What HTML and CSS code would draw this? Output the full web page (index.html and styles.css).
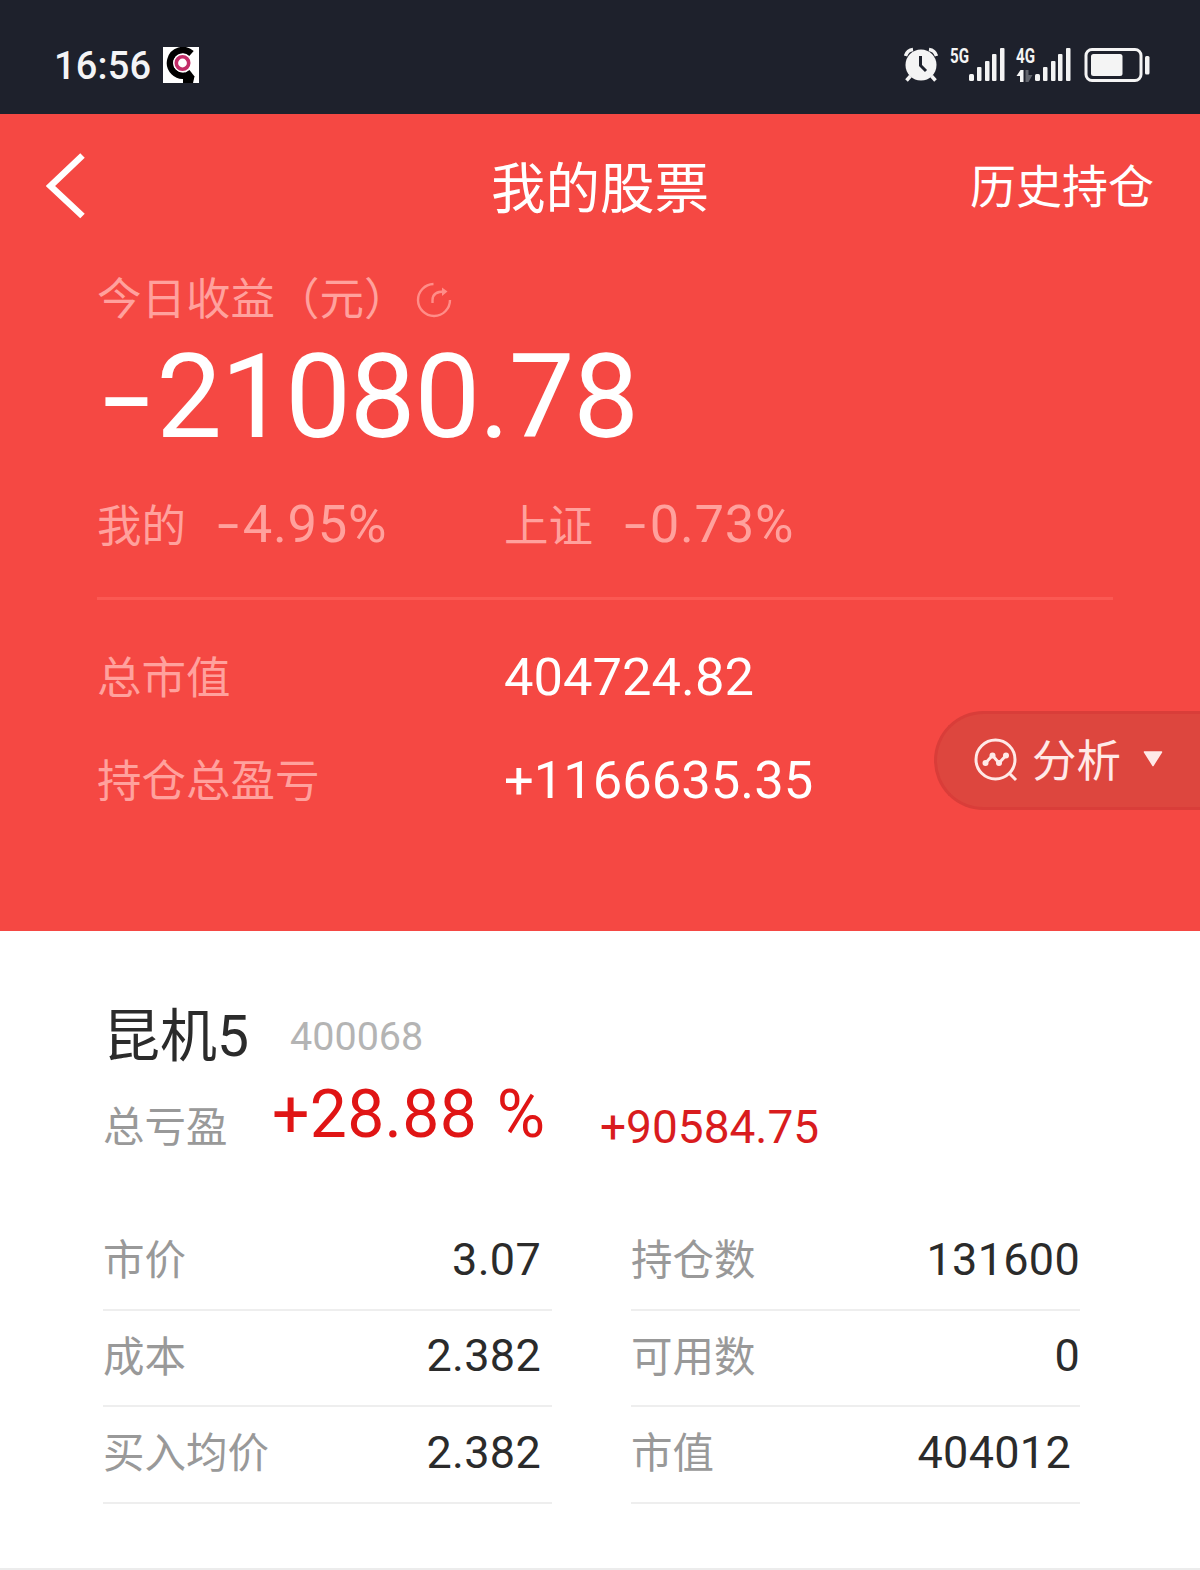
FILE: index.html
```html
<!DOCTYPE html>
<html lang="zh-CN">
<head>
  <meta charset="UTF-8" />
  <meta name="viewport" content="width=device-width, initial-scale=1" />
  <title>我的股票</title>
  <link rel="stylesheet" href="styles.css">
</head>
<body>
  <div id="status-bar">
    <div class="status-left">
      <span class="clock">16:56</span>
      <svg class="app-icon" width="36" height="36" viewBox="0 0 36 36">
        <rect width="36" height="36" fill="#fff"/>
        <path d="M28.500 6.500A12.800 12.800 0 1 0 23 28.300" fill="none" stroke="#000" stroke-width="6.500"/>
        <path d="M20 27l6.500-4 5 6.500-1.500 6.500H20z" fill="#000"/>
        <circle cx="19.500" cy="16" r="9.300" fill="#fff"/>
        <circle cx="19.500" cy="16" r="6.200" fill="none" stroke="#c22d68" stroke-width="3.600"/>
      </svg>
    </div>
    <div class="status-right">
      <svg width="246" height="56" viewBox="0 -10 246 56">
        <g fill="none" stroke="#f4f4f4">
          <path d="M1.500 9A9 9 0 0 1 9 2.500M25 2.500a9 9 0 0 1 7.500 6.500" stroke-width="3.500"/>
          <path d="M6.500 29l-4 4.500M27.500 29l4 4.500" stroke-width="3.500"/>
        </g>
        <circle cx="17" cy="18" r="15.500" fill="#f4f4f4"/>
        <path d="M16.500 9v9.500l5.500 5.500" fill="none" stroke="#1e212c" stroke-width="3"/>
        <text class="net" x="46" y="16" textLength="19" lengthAdjust="spacingAndGlyphs">5G</text>
        <text class="net" x="112" y="16" textLength="19" lengthAdjust="spacingAndGlyphs">4G</text>
        <g fill="#f4f4f4">
          <rect x="65" y="27" width="5" height="7" rx="1.500"/>
          <rect x="73" y="20" width="4.500" height="14" rx="1"/>
          <rect x="81" y="14" width="4.500" height="20" rx="1"/>
          <rect x="88" y="7" width="4.500" height="27" rx="1"/>
          <rect x="96" y="1" width="4.500" height="33" rx="1"/>
          <rect x="131" y="27" width="5" height="7" rx="1.500"/>
          <rect x="139" y="20" width="4.500" height="14" rx="1"/>
          <rect x="147" y="14" width="4.500" height="20" rx="1"/>
          <rect x="154" y="7" width="4.500" height="27" rx="1"/>
          <rect x="162" y="1" width="4.500" height="33" rx="1"/>
          <path d="M116.500 23h3v12h-3.500v-6h-3.500z"/>
        </g>
        <path d="M121.500 23h3v5h4l-4 7h-3z" fill="#62656d"/>
        <rect x="182" y="2.500" width="55" height="31" rx="6" fill="none" stroke="#f4f4f4" stroke-width="3"/>
        <rect x="187" y="7" width="31.500" height="22" rx="2.500" fill="#f4f4f4"/>
        <rect x="241" y="9" width="4.500" height="18.500" rx="1.500" fill="#f4f4f4"/>
      </svg>
    </div>
  </div>

  <header>
    <nav>
      <svg class="back" width="40" height="66" viewBox="0 0 40 66">
        <path d="M36.500 2.500L4.500 33l32 30" fill="none" stroke="#fff" stroke-width="6.500"/>
      </svg>
      <h1>我的股票</h1>
      <a class="history">历史持仓</a>
    </nav>

    <div class="today-label">
      <span>今日收益（元）</span>
      <svg width="36" height="36" viewBox="0 0 36 36" fill="none" stroke="#ff8d88" stroke-width="2.400">
        <path d="M17.500 2A16 16 0 1 0 34 18"/>
        <path d="M16.500 21v-3q0-8.500 12-8.500"/>
        <path d="M26 5.500l5.500 4-5.500 4.500z" fill="#ff8d88" stroke="none"/>
      </svg>
    </div>
    <div class="today-value"><span class="minus">-</span>21080.78</div>

    <div class="summary rates">
      <div><span>我的</span><b><i class="minus">-</i>4.95%</b></div>
      <div><span>上证</span><b><i class="minus">-</i>0.73%</b></div>
    </div>

    <div class="summary total"><span>总市值</span><b>404724.82</b></div>
    <div class="summary total"><span>持仓总盈亏</span><b>+1166635.35</b></div>

    <div id="analyse">
      <svg width="44" height="44" viewBox="0 0 44 44" fill="none" stroke="#ffe9e7" stroke-width="3">
        <circle cx="21.500" cy="21.500" r="19.500"/>
        <path d="M35 35l7 7"/>
        <path d="M11.500 25l7-7.500 6.500 7.500 7-7.500"/>
        <g fill="#ffe9e7" stroke="none">
          <circle cx="11.500" cy="25" r="3"/><circle cx="18.500" cy="17.500" r="3"/>
          <circle cx="25" cy="25" r="3"/><circle cx="32" cy="17.500" r="3"/>
        </g>
      </svg>
      <span>分析</span>
      <svg class="caret" width="20" height="16" viewBox="0 0 20 16">
        <path d="M1.500 1h17L10 14.500z" fill="#ffe9e7" stroke="#ffe9e7" stroke-width="1.500" stroke-linejoin="round"/>
      </svg>
    </div>
  </header>

  <main>
    <div class="stock-name"><h2>昆机5</h2><span>400068</span></div>
    <div class="stock-profit">
      <span class="label">总亏盈</span>
      <span class="percent">+28.88 %</span>
      <span class="amount">+90584.75</span>
    </div>
    <div class="stock-grid">
      <div class="cell"><span>市价</span><b>3.07</b></div>
      <div class="cell"><span>持仓数</span><b>131600</b></div>
      <div class="cell"><span>成本</span><b>2.382</b></div>
      <div class="cell"><span>可用数</span><b>0</b></div>
      <div class="cell"><span>买入均价</span><b>2.382</b></div>
      <div class="cell"><span>市值</span><b class="inset">404012</b></div>
    </div>
  </main>
</body>
</html>
```
FILE: styles.css
```css
* {
  box-sizing: border-box;
}

body {
  margin: 0;
  width: 1200px;
  height: 1570px;
  overflow: hidden;
  font-family: Roboto, 'Noto Sans CJK SC', sans-serif;
  background: #fff;
  white-space: nowrap;
}

h1, h2, b, i {
  margin: 0;
  font-weight: normal;
  font-style: normal;
}

svg {
  display: block;
  flex: none;
}

#status-bar {
  height: 114px;
  padding: 16px 50px 0 54px;
  display: flex;
  justify-content: space-between;
  align-items: center;
  background: #1e212c;
  color: #f4f4f6;
}

.status-left {
  display: flex;
  align-items: center;
  gap: 12px;
}

.clock {
  width: 97px;
  padding-top: 2px;
  font-size: 38px;
  font-weight: 500;
  letter-spacing: 0.2px;
}

.net {
  font-size: 21px;
  font-weight: bold;
  fill: #f4f4f4;
}

header {
  position: relative;
  height: 817px;
  padding: 0 87px 0 97px;
  background: #f54843;
  color: #fff;
}

nav {
  height: 146px;
  margin: 0 -41px 0 -51px;
  display: grid;
  grid-template-columns: 1fr auto 1fr;
  align-items: center;
}

.back {
  margin-bottom: 2px;
}

h1 {
  padding-top: 4px;
  font-size: 54.5px;
  line-height: 60px;
}

.history {
  font-size: 46px;
  line-height: 60px;
  text-align: right;
}

.today-label {
  height: 78px;
  padding-bottom: 2px;
  display: flex;
  align-items: center;
  gap: 7px;
  font-size: 44.5px;
  line-height: 60px;
  color: #ffa19d;
}

.today-label span {
  padding-top: 3px;
}

.today-label svg {
  margin-top: 4px;
}

.today-value {
  height: 114px;
  padding-top: 1px;
  line-height: 116px;
  font-size: 117px;
  letter-spacing: -1.2px;
}

.minus {
  display: inline-block;
  transform: scaleX(1.5);
  margin: 0 0.13em 0 0.11em;
}

.summary {
  display: flex;
  align-items: center;
  font-size: 44.5px;
  line-height: 60px;
  color: #ffa19d;
}

.summary span {
  padding-top: 4px;
}

.summary b {
  font-size: 52.5px;
}

.rates {
  height: 148px;
  border-bottom: 3px solid #fb5953;
}

.rates div {
  width: 407px;
  display: flex;
  align-items: center;
}

.rates b {
  margin: 0 0 2px 29px;
  letter-spacing: 0.7px;
}

.total {
  height: 103px;
}

.rates + .total {
  margin-top: 25px;
}

.total span {
  width: 407px;
}

.total b {
  color: #fff;
}

#analyse {
  position: absolute;
  right: 0;
  top: 597px;
  width: 266px;
  height: 99px;
  padding: 0 0 2px 37px;
  display: flex;
  align-items: center;
  border: 3px solid #d93d39;
  border-right: 0;
  border-radius: 50px 0 0 50px;
  background: #dd463e;
  color: #ffe9e7;
  font-size: 44.5px;
  line-height: 60px;
}

#analyse span {
  margin-left: 14px;
  padding-top: 4px;
}

.caret {
  margin: 0 0 2px 22px;
}

main {
  height: 639px;
  padding: 70px 120px 0 103px;
  border-bottom: 2px solid #ececec;
}

.stock-name {
  display: flex;
  align-items: center;
  height: 70px;
}

.stock-name h2 {
  padding-top: 1px;
  font-size: 57px;
  line-height: 70px;
  color: #2b2b2b;
}

.stock-name span {
  margin-left: 41px;
  font-size: 39.5px;
  color: #b4b4b4;
}

.stock-profit {
  height: 100px;
  display: flex;
  align-items: center;
}

.label {
  width: 169px;
  padding-top: 5px;
  font-size: 41.5px;
  color: #999;
}

.percent {
  width: 328px;
  padding-bottom: 13px;
  font-size: 66px;
  letter-spacing: 0.3px;
  word-spacing: 3px;
  color: #e01515;
}

.amount {
  padding-top: 11px;
  font-size: 46px;
  color: #d91c1e;
}

.stock-grid {
  margin-top: 43px;
  display: grid;
  grid-template-columns: 449px 449px;
  grid-auto-rows: 96.500px;
  column-gap: 79px;
}

.cell {
  padding-right: 11px;
  display: flex;
  justify-content: space-between;
  align-items: center;
  border-bottom: 2px solid #eee;
  font-size: 41.5px;
  line-height: 60px;
  color: #999;
}

.cell:nth-child(even) {
  padding-right: 0;
}

.cell b {
  padding-bottom: 3px;
  font-size: 45px;
  letter-spacing: 0.3px;
  color: #2b2b2b;
}

.cell .inset {
  margin-right: 9px;
}
```
